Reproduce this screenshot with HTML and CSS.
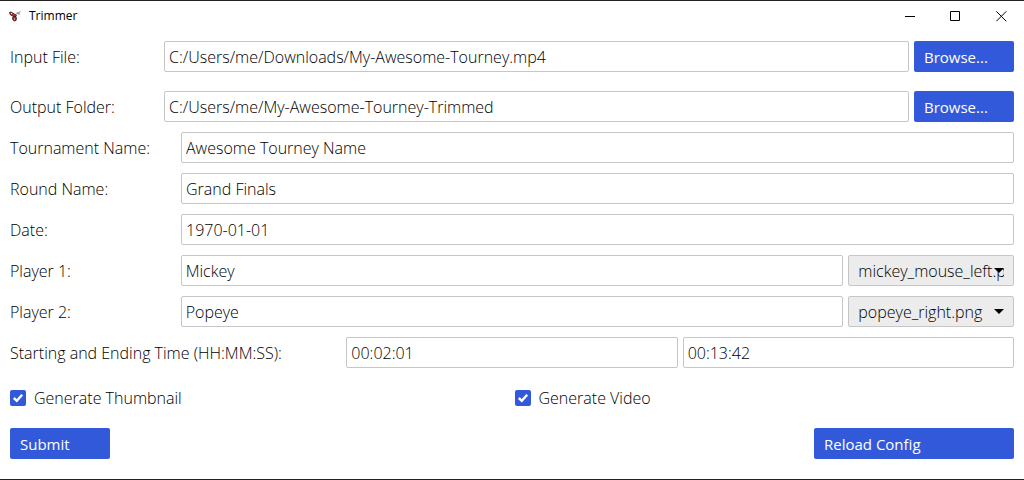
FILE: index.html
```html
<!DOCTYPE html>
<html lang="en">
<head>
<meta charset="utf-8">
<meta name="viewport" content="width=device-width, initial-scale=1">
<title>Trimmer</title>
<link rel="stylesheet" href="styles.css">
</head>
<body>
<div class="window">
  <header class="titlebar">
    <svg class="app-icon" viewBox="0 0 12 12" aria-hidden="true">
      <path d="M6 5 8.500 3.500 11.500 1.500M8 2 9 4 11 4" stroke="#777" stroke-width=".9" fill="none"/>
      <path d="M.5 2.500 2 2 6 4.500 7.500 5.500 6.500 7 4 6 1.500 5Z" fill="#c63a32" stroke="#2a1010" stroke-width=".8"/>
      <path d="M4 6.500 6 6 7.500 8 7 10.500 5 11 3.500 9Z" fill="#b52d28" stroke="#2a1010" stroke-width=".8"/>
      <circle cx="2.500" cy="3.500" r=".6" fill="#fff"/>
      <circle cx="5.500" cy="9" r=".6" fill="#fff"/>
    </svg>
    <h1 class="title">Trimmer</h1>
    <div class="window-controls">
      <button class="window-button" type="button" aria-label="Minimize"><svg viewBox="0 0 11 11"><path d="M1 5.5H11"/></svg></button>
      <button class="window-button" type="button" aria-label="Maximize"><svg viewBox="0 0 11 11"><path d="M.5 .5H9.5V9.5H.5Z"/></svg></button>
      <button class="window-button" type="button" aria-label="Close"><svg viewBox="0 0 11 11"><path d="M.3 .3 10.3 10.3M10.3 .3 .3 10.3"/></svg></button>
    </div>
  </header>
  <form class="form">
    <div class="row row-file row-spaced">
      <label for="input-file">Input File:</label>
      <input class="field" id="input-file" type="text" value="C:/Users/me/Downloads/My-Awesome-Tourney.mp4">
      <button class="button" type="button">Browse...</button>
    </div>
    <div class="row row-file">
      <label for="output-folder">Output Folder:</label>
      <input class="field" id="output-folder" type="text" value="C:/Users/me/My-Awesome-Tourney-Trimmed">
      <button class="button" type="button">Browse...</button>
    </div>
    <div class="row row-text">
      <label for="tournament">Tournament Name:</label>
      <input class="field" id="tournament" type="text" value="Awesome Tourney Name">
    </div>
    <div class="row row-text">
      <label for="round">Round Name:</label>
      <input class="field" id="round" type="text" value="Grand Finals">
    </div>
    <div class="row row-text">
      <label for="date">Date:</label>
      <input class="field" id="date" type="text" value="1970-01-01">
    </div>
    <div class="row row-player">
      <label for="player1">Player 1:</label>
      <input class="field" id="player1" type="text" value="Mickey">
      <div class="select-box">
        <select class="select" aria-label="Player 1 image"><option>mickey_mouse_left.png</option></select>
      </div>
    </div>
    <div class="row row-player">
      <label for="player2">Player 2:</label>
      <input class="field" id="player2" type="text" value="Popeye">
      <div class="select-box">
        <select class="select" aria-label="Player 2 image"><option>popeye_right.png</option></select>
      </div>
    </div>
    <div class="row row-time">
      <label for="start">Starting and Ending Time (HH:MM:SS):</label>
      <input class="field" id="start" type="text" value="00:02:01">
      <input class="field" type="text" aria-label="Ending time" value="00:13:42">
    </div>
    <div class="checks">
      <label class="check"><input class="checkbox" type="checkbox" checked>Generate Thumbnail</label>
      <label class="check"><input class="checkbox" type="checkbox" checked>Generate Video</label>
    </div>
    <div class="actions">
      <button class="button" type="button">Submit</button>
      <button class="button button-wide" type="button">Reload Config</button>
    </div>
  </form>
</div>
</body>
</html>
```
FILE: styles.css
```css
* {
  box-sizing: border-box;
}

body {
  margin: 0;
  background: #fff;
  color: #000;
  font: 300 16px/20px "Open Sans", "Noto Sans", sans-serif;
}

.window {
  min-height: 100vh;
  border-top: 1px solid #222;
  border-bottom: 1px solid #222;
}

.titlebar {
  display: flex;
  align-items: center;
  height: 30px;
  padding-left: 9px;
}

.app-icon {
  width: 12px;
  height: 12px;
  margin-right: 8px;
}

.title {
  margin: 0;
  font-size: 12px;
  font-weight: 400;
}

.window-controls {
  display: flex;
  margin-left: auto;
}

.window-button {
  display: flex;
  align-items: center;
  justify-content: center;
  width: 46px;
  height: 29px;
  padding: 0;
  border: 0;
  background: none;
}

.window-button svg {
  width: 11px;
  height: 11px;
  fill: none;
  stroke: #000;
}

.form {
  display: flex;
  flex-direction: column;
  gap: 10px;
  padding: 10px;
}

.row {
  display: grid;
  align-items: center;
  column-gap: 5px;
}

.row-spaced {
  margin-bottom: 9px;
}

.row-file {
  grid-template-columns: 149px 1fr 100px;
}

.row-text {
  grid-template-columns: 166px 1fr;
}

.row-player {
  grid-template-columns: 1fr 4fr 1fr;
}

.row-time {
  grid-template-columns: 1fr 1fr 1fr;
}

.field,
.select,
.button {
  width: 100%;
  min-width: 0;
  height: 31px;
  border: 1px solid #c6c6c6;
  border-radius: 2px;
  color: inherit;
  font: inherit;
}

.field {
  padding: 0 4px;
  background: #fff;
}

.button {
  width: 100px;
  padding: 0 10px;
  border: 0;
  background: #3259d9;
  color: #fff;
  font-size: 15px;
  font-weight: 400;
  text-align: left;
}

.button-wide {
  width: 200px;
}

.select-box {
  position: relative;
}

.select {
  display: block;
  appearance: none;
  padding: 0 9px;
  background: #ececec;
}

.select-box::after {
  content: "";
  position: absolute;
  top: 13px;
  right: 10px;
  border: 5px solid transparent;
  border-top-color: #000;
  border-bottom: 0;
  pointer-events: none;
}

.checks {
  display: grid;
  grid-template-columns: 1fr 1fr;
  column-gap: 5px;
  margin: 10px 0;
}

.check {
  display: flex;
  align-items: center;
  gap: 8px;
}

.checkbox {
  appearance: none;
  width: 16px;
  height: 16px;
  margin: 0;
  border-radius: 2px;
  background: #ddd;
}

.checkbox:checked {
  background: #3259d9 url("data:image/svg+xml,%3Csvg xmlns='http://www.w3.org/2000/svg' viewBox='0 0 16 16'%3E%3Cpath d='M3.8 8 6.8 10.8 12.2 4.8' fill='none' stroke='white' stroke-width='2.4'/%3E%3C/svg%3E");
}

.actions {
  display: flex;
  justify-content: space-between;
}
```
